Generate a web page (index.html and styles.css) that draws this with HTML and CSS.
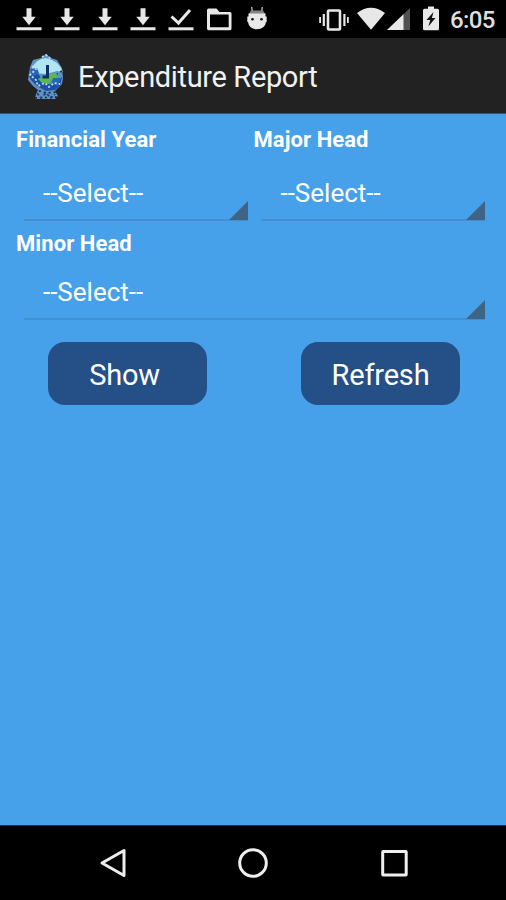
FILE: index.html
```html
<!DOCTYPE html>
<html lang="en">
<head>
<meta charset="utf-8">
<title>Expenditure Report</title>
<link rel="stylesheet" href="styles.css">
</head>
<body>
<svg class="defs" width="0" height="0" aria-hidden="true">
  <symbol id="download" viewBox="0 0 38 38"><path d="M16.500 8.300h5v8.500h4.200L19 25.200l-6.700-8.400h4.200zM6.500 27.300h25v3h-25z"/></symbol>
</svg>
<div class="screen">
  <div class="status">
    <div class="notifications">
      <svg class="cell"><use href="#download"/></svg>
      <svg class="cell"><use href="#download"/></svg>
      <svg class="cell"><use href="#download"/></svg>
      <svg class="cell"><use href="#download"/></svg>
      <svg class="cell" viewBox="0 0 38 38"><path class="line" d="M9.500 16.500L16.500 23 28 10"/><path d="M6.500 27.300h25v3h-25z"/></svg>
      <svg class="cell" viewBox="0 0 38 38"><path fill-rule="evenodd" d="M8.500 8.500h8l3 3.500h10.500q1.500 0 1.500 1.500v15q0 1.700-1.500 1.700H8.500Q7 30.200 7 28.500V10.200Q7 8.500 8.500 8.500zM10 14.500v12.800h18.700V14.500z"/></svg>
      <svg class="cell" viewBox="0 0 38 38"><path class="antenna" d="M13.700 7l.8 6M24.300 7l-.8 6"/><path class="brow" d="M13 10.500h12l2.500 4h-17z"/><path d="M10.500 13.500h17v3h1.200v5.500H28q-1 7.200-9 7.200T10 22h-.7v-5.500h1.200z"/><circle class="dark" cx="14.500" cy="19.300" r="1.300"/><circle class="dark" cx="23.500" cy="19.300" r="1.300"/></svg>
    </div>
    <div class="system">
      <svg class="vibrate" viewBox="0 0 32 38"><path d="M.2 17h1.800v6H.2zM3.700 14h2.200v12H3.700zM24.300 14h2.200v12h-2.200zM28 17h1.800v6H28z"/><rect class="frame" x="9" y="10.500" width="12" height="19" rx="1"/></svg>
      <svg class="wifi" viewBox="0 0 28 38"><path d="M0 13q14-10.500 28 0L14 29.800z"/></svg>
      <svg class="signal" viewBox="0 0 23 38"><path class="dim" d="M23 8v22H0z"/><path d="M16.500 14.200V30H0z"/></svg>
      <svg class="battery" viewBox="0 0 16 38"><path d="M5 6.500h6v2.300h3.500q1.500 0 1.500 1.500v18.500q0 1.500-1.500 1.500h-13Q0 30.300 0 28.800V10.300q0-1.500 1.500-1.500H5z"/><path class="dark" d="M10.500 12L3.500 20h3.800l-2 6.500 7.200-8.500H8.900z"/></svg>
      <span class="clock">6:05</span>
    </div>
  </div>

  <header class="appbar">
    <svg class="logo" viewBox="0 0 36 46">
      <path fill="#5f93c4" d="M13 4L18 0l5 4 6 2 5 8 1 10-1 6-5 5-2 2 3 5-3 3H7l1-5 2-4-5-4-5-6 1-6 1-7 3-7z"/>
      <path fill="#b0e6f2" d="M4 14Q8 5 18 4q12 2 17 14l-6-1-11 3-13-1z"/>
      <path fill="#1c50a6" d="M0 20l10-1 5 9 8 2 11-7-2 9-5 4-9 1-9-5-6-6z"/>
      <path fill="#5cb848" d="M10 25l9-5 9-1 1 6-6 1-2 4-7-1z"/>
      <path fill="#2468b4" d="M2 15l7-1 2 5-7 5zM25 24h8l-3 8-7-2z"/>
      <path fill="none" stroke="#0f2f69" stroke-width="3" d="M19.500 11v12h-5"/>
      <path fill="none" stroke="#c7d8e8" stroke-width="1.800" stroke-dasharray="2 2" d="M4 12l4 3-6 6 6 5 2 6 7-3 4 4 5-4 6 1M14 3l4-2 5 4"/>
      <path fill="none" stroke="#222" stroke-width="1.600" stroke-dasharray="2 3" d="M6 38l6-1 6 2 11-1M7 44l22-1M34 17l-5 3"/>
      <path fill="none" stroke="#1b4392" stroke-width="1.800" stroke-dasharray="3 2" d="M9 39l4 5 5-5 5 5 4-4"/>
    </svg>
    <h1 class="title">Expenditure Report</h1>
  </header>

  <main class="content">
    <div class="pair">
      <div class="field">
        <div class="label">Financial Year</div>
        <div class="spinner"><span class="value">--Select--</span><svg class="corner" viewBox="0 0 19 19"><path d="M19 0v19H0z"/></svg></div>
      </div>
      <div class="field">
        <div class="label">Major Head</div>
        <div class="spinner"><span class="value">--Select--</span><svg class="corner" viewBox="0 0 19 19"><path d="M19 0v19H0z"/></svg></div>
      </div>
    </div>
    <div class="field minor">
      <div class="label">Minor Head</div>
      <div class="spinner"><span class="value">--Select--</span><svg class="corner" viewBox="0 0 19 19"><path d="M19 0v19H0z"/></svg></div>
    </div>
    <div class="actions">
      <button class="button show">Show</button>
      <button class="button">Refresh</button>
    </div>
  </main>

  <nav class="navbar">
    <svg class="nav-icon" viewBox="0 0 32 32"><path d="M28 3.500v25L6 16z"/></svg>
    <svg class="nav-icon" viewBox="0 0 32 32"><circle cx="16" cy="16" r="13.300"/></svg>
    <svg class="nav-icon" viewBox="0 0 32 32"><rect x="4.700" y="4.500" width="23.500" height="23.500" rx=".5"/></svg>
  </nav>
</div>
</body>
</html>
```
FILE: styles.css
```css
* { box-sizing: border-box; }
body { margin: 0; background: #000; font-family: Roboto, "Liberation Sans", sans-serif; }
svg { display: block; flex: none; }
.defs { display: none; }
.screen { width: 506px; height: 900px; display: flex; flex-direction: column; color: #fff; overflow: hidden; }

.status { height: 38px; background: #000; display: flex; justify-content: space-between; padding: 0 11px 0 10px; fill: #e8e8e8; }
.notifications, .system { display: flex; }
.cell { width: 38px; height: 38px; }
.line { fill: none; stroke: #e8e8e8; stroke-width: 3; }
.antenna { fill: none; stroke: #aaa; stroke-width: 1.5; }
.brow { fill: #858585; }
.dark { fill: #111; }
.dim { fill: #505050; }
.frame { fill: none; stroke: #e8e8e8; stroke-width: 2.6; }
.vibrate { width: 32px; height: 38px; margin-right: 6px; }
.wifi { width: 28px; height: 38px; margin-right: 2px; }
.signal { width: 23px; height: 38px; margin-right: 13px; }
.battery { width: 16px; height: 38px; margin-right: 11px; }
.clock { width: 45px; font-size: 24px; font-weight: 500; line-height: 40px; color: #dedede; white-space: nowrap; letter-spacing: -.6px; }

.appbar { height: 76px; background: #222; border-bottom: 1px solid #315675; display: flex; align-items: center; padding: 2px 0 0 28px; gap: 14px; }
.logo { width: 36px; height: 46px; }
.title { margin: 0; font-size: 29px; font-weight: 400; line-height: 36px; color: #f2f2f2; white-space: nowrap; letter-spacing: -.35px; }

.content { flex: 1; background: #46a0ea; }
.pair { display: grid; grid-template-columns: 237.5px 237.5px; padding-left: 16px; }
.label { height: 51px; font-size: 22px; font-weight: 700; line-height: 51px; white-space: nowrap; letter-spacing: .08px; }
.spinner { height: 56px; margin: 0 6px 0 8px; padding-left: 19px; border-bottom: 2px solid #438fd2; display: flex; justify-content: space-between; align-items: flex-end; }
.value { font-size: 26px; line-height: 51px; white-space: nowrap; }
.corner { width: 19px; height: 19px; fill: #3f6485; margin-bottom: -1px; }
.minor { padding: 0 16px; }
.minor .label { height: 46px; line-height: 46px; }
.minor .spinner { height: 53px; margin-right: 5px; }
.minor .value { line-height: 52px; }
.actions { display: flex; justify-content: space-between; padding: 22px 46px 0 48px; }
.button { width: 159px; height: 63px; border: 0; border-radius: 17px; background: #254f87; color: #fff; font: 400 29px/63px Roboto, "Liberation Sans", sans-serif; padding: 2px 0 0; letter-spacing: -.2px; }
.show { padding-right: 6px; }

.navbar { height: 75px; background: #000; border-top: 1px solid #17334b; display: flex; justify-content: space-between; align-items: center; padding: 0 96px 0 96px; }
.nav-icon { width: 32px; height: 32px; fill: none; stroke: #eee; stroke-width: 3; stroke-linejoin: round; }
```
